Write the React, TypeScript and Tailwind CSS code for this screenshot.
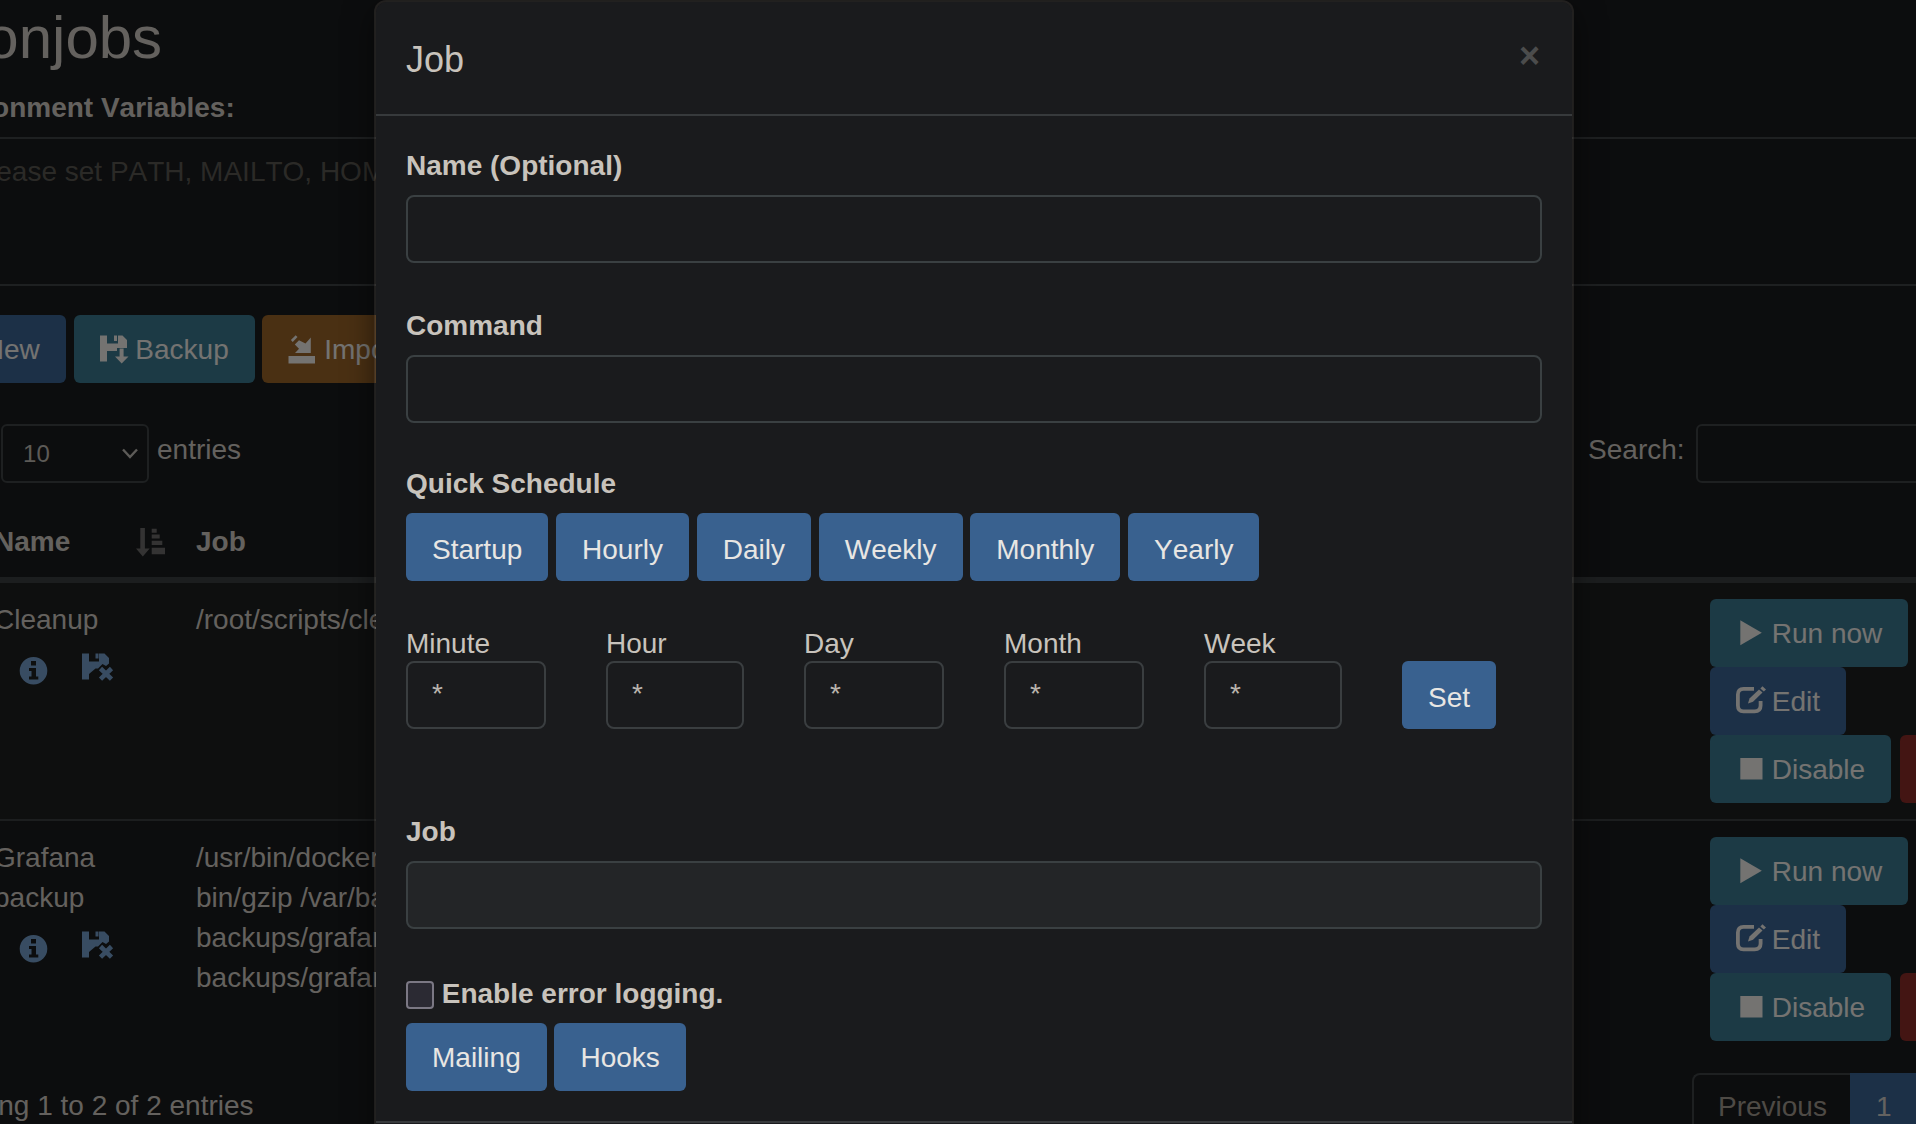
import type { ReactNode } from "react";

type IconName = "plus" | "save" | "remove" | "import" | "sort" | "play" | "edit" | "stop" | "info";

const floppyBody = "M0 .5H7V8.5H17V.5H22.5L27 5V10.5L24 13L20.5 11L16 15.5H13.5L7 21V26.5H0Z";

const shapes: Record<IconName, ReactNode> = {
  plus: <path d="M11 3h6v8h8v6h-8v8h-6v-8H3v-6h8z" />,
  save: (
    <>
      <path d="M0 .5H7V8.5H18V.5H22.5L27 5V13H17V16H7V26.5H0Z" />
      <path d="M14 .5h3v5.5h-3zM19.600 13.500h4v8h4.900L21.700 28.500L15 21.500h4.600z" />
    </>
  ),
  remove: (
    <>
      <path d={floppyBody} />
      <path d="M13.5 .5h3v5h-3z" />
      <path d="M18.500 15.500L29.500 26.200M29.500 15.500L18.500 26.200" stroke="currentColor" strokeWidth="4.600" />
    </>
  ),
  import: (
    <>
      <path d="M22.800 2.500V18H7L11 13.800L6.800 9.600L11 5.200L17.500 8.500z" />
      <path d="M3.800 6L8.600 1.200" stroke="currentColor" strokeWidth="2.600" />
      <path d="M.5 21H27V28.500H.5z" />
    </>
  ),
  sort: (
    <>
      <path d="M4.300 0h4.600v20.500h4.800L6.800 28.500L0 20.500h4.300z" />
      <path d="M15.700 .7h5v4h-5zM15.700 6.500h8v4h-8zM15.700 12.700h10.600v4.200H15.700zM15.700 19.700h13.300v6.500H15.700z" />
    </>
  ),
  play: <path d="M4.300 1.200L25.800 13.700L4.300 26.200z" />,
  edit: (
    <>
      <path
        d="M18 1.900H7.500Q1.900 1.900 1.900 7.500V18.500Q1.900 24.300 7.500 24.300H18.500Q24.600 24.300 24.600 18.500V14"
        fill="none"
        stroke="currentColor"
        strokeWidth="3.800"
      />
      <path d="M12 16.500L13.500 11.500L23 2.500L26.500 5.500L17 14.800z" />
      <path d="M26.400 -.8L30 2.500L27.800 4.500L24.400 1.400z" />
    </>
  ),
  stop: <path d="M4.300 3h22.200v21.500H4.300z" />,
  info: (
    <path
      fillRule="evenodd"
      d="M13.500 0a13.800 13.800 0 1 1 0 27.600a13.800 13.800 0 1 1 0 -27.600zM11 4h5v4.500h-5zM9 11h7v8.500h2.300v3H9v-3h2.500v-5.500H9z"
    />
  ),
};

function Glyph({ name, className = "" }: { name: IconName; className?: string }) {
  return (
    <svg viewBox="0 0 28 28" className={`h-[28px] w-[28px] shrink-0 overflow-visible ${className}`} fill="currentColor">
      {shapes[name]}
    </svg>
  );
}

const tones = {
  primary: "bg-[#39618f]",
  info: "bg-[#38748a]",
  warning: "bg-[#946026]",
  danger: "bg-[#862a26]",
};

function Button({
  tone = "primary",
  icon,
  iconClass,
  labelClass = "pt-[2px]",
  children,
}: {
  tone?: keyof typeof tones;
  icon?: IconName;
  iconClass?: string;
  labelClass?: string;
  children: ReactNode;
}) {
  return (
    <button
      className={`flex h-[68px] shrink-0 items-center gap-[7.780px] rounded-[6px] px-[26px] leading-[40px] whitespace-nowrap text-[#e8e6e3] ${tones[tone]}`}
    >
      {icon && <Glyph name={icon} className={iconClass} />}
      <span className={labelClass}>{children}</span>
    </button>
  );
}

function JobRow({ name, job, striped }: { name: string[]; job: string[]; striped?: boolean }) {
  return (
    <div
      className={`flex h-[238px] border-t-2 border-[#383c3f] pt-[16px] ${striped ? "bg-[#1c1e1f]" : ""}`}
    >
      <div className="w-[202px] shrink-0 pt-px pl-[72px]">
        {name.map((line) => (
          <div key={line}>{line}</div>
        ))}
        <div className="flex pt-[17px] pl-[26px] text-[#7099c4]">
          <Glyph name="info" />
          <Glyph name="remove" className="-mt-[4px] ml-[34px]" />
        </div>
      </div>
      <div className="w-[1586px] shrink-0 pt-px pl-[72px]">
        {job.map((line, i) => (
          <div key={i}>{line}</div>
        ))}
      </div>
      <div>
        <div className="flex">
          <Button tone="info" icon="play" iconClass="mb-px">
            Run now
          </Button>
        </div>
        <div className="flex">
          <Button icon="edit">Edit</Button>
        </div>
        <div className="flex gap-[9px]">
          <Button tone="info" icon="stop">
            Disable
          </Button>
          <Button tone="danger">{""}</Button>
        </div>
      </div>
    </div>
  );
}

function CronPage() {
  return (
    <div className="-ml-[78px] h-[1124px] w-[2180px] shrink-0 pt-[5px]">
      <h2 className="mb-[17px] h-[66px] text-[60px] leading-[66px]">Cronjobs</h2>
      <div className="h-[49px] font-bold">Environment Variables:</div>
      <div className="h-[149px] rounded-[8px] border-2 border-[#3c4042] px-[24px] py-[13px] text-[#57544f]">
        # Please set PATH, MAILTO, HOME
      </div>
      <div className="mt-[29px] flex gap-[7.780px]">
        <Button icon="plus">New</Button>
        <Button tone="info" icon="save">
          Backup
        </Button>
        <Button tone="warning" icon="import">
          Import
        </Button>
      </div>
      <div className="mt-[41px] flex h-[60px]">
        <span className="-mt-[1px] pt-[8px]">Show</span>
        <div className="ml-[9px] flex h-[59px] w-[148px] items-center justify-between rounded-[6px] border-2 border-[#3c4042] pr-[9px] pl-[20px] text-[24px] text-[#b9b4ad]">
          <span className="leading-[36px]">10</span>
          <svg viewBox="0 0 16 11" className="mb-px h-[11px] w-[16px]" fill="none" stroke="#bab6b0" strokeWidth="2.400">
            <path d="M1 1.500L8 9L15 1.500" />
          </svg>
        </div>
        <span className="ml-[8px] pt-[6px]">entries</span>
        <span className="ml-[1347px] pt-[6px]">Search:</span>
        <div className="ml-[11px] h-[59px] w-[320px] rounded-[6px] border-2 border-[#3c4042]" />
      </div>
      <div className="flex h-[97px] items-end border-b-4 border-[#383c3f] pb-[15px] font-bold">
        <div className="flex w-[274px] items-center pl-[72px]">
          Name
          <Glyph name="sort" className="mb-px ml-[66px] text-[#686766]" />
        </div>
        <div>Job</div>
      </div>
      <JobRow striped name={["Cleanup"]} job={["/root/scripts/cleanup.sh"]} />
      <JobRow
        name={["Grafana", "backup"]}
        job={["/usr/bin/docker", "bin/gzip /var/back", "backups/grafana", "backups/grafana"]}
      />
      <div className="mt-[16px] flex">
        <div className="w-[1770px] pt-[13px]">Showing 1 to 2 of 2 entries</div>
        <div className="h-[68px] rounded-l-[8px] border-2 border-r-0 border-[#3c4042] pt-[12px] pr-[23px] pl-[24px] text-[#9c958b]">
          Previous
        </div>
        <div className="h-[68px] bg-[#39618f] px-[26px] py-[14px] text-[#c8c5c1]">1</div>
      </div>
    </div>
  );
}

function Field({ label, disabled }: { label: string; disabled?: boolean }) {
  return (
    <div>
      <div className="mb-[9px] h-[40px] font-bold">{label}</div>
      <div
        className={`h-[68px] rounded-[8px] border-2 border-[#3a4042] ${disabled ? "bg-[#232527]" : "bg-[#1a1b1d]"}`}
      />
    </div>
  );
}

function TimePart({ label, width }: { label: string; width: string }) {
  return (
    <div className={width}>
      <div className="h-[37px]">{label}</div>
      <div className="h-[68px] rounded-[8px] border-2 border-[#3a3e40] px-[24px] py-[11px] text-[#b9b4ad]">*</div>
    </div>
  );
}

function JobModal() {
  return (
    <div className="h-[1300px] w-[1200px] rounded-[12px] border-2 border-[#8c8273]/18 bg-[#1a1b1d] bg-clip-padding shadow-[0_10px_30px_rgba(0,0,0,0.5)]">
      <div className="flex h-[114px] justify-between border-b-2 border-[#373a3c] px-[30px] pt-[32px]">
        <h4 className="text-[36px] leading-[51px]">Job</h4>
        <button className="mt-px mr-[2px] h-[42px] text-[36px] leading-[42px] font-bold text-[#4b4c4c]">×</button>
      </div>
      <div className="h-[1007px] border-b-2 border-[#373a3c] px-[30px] pt-[30px]">
        <Field label="Name (Optional)" />
        <div className="mt-[43px]">
          <Field label="Command" />
        </div>
        <div className="mt-[41px] mb-[9px] h-[40px] font-bold">Quick Schedule</div>
        <div className="flex gap-[7.780px]">
          {["Startup", "Hourly", "Daily", "Weekly", "Monthly", "Yearly"].map((s) => (
            <Button key={s} labelClass="pt-[5px]">
              {s}
            </Button>
          ))}
        </div>
        <div className="mt-[43px] grid grid-cols-[200px_198px_200px_200px_198px_94px] items-end">
          <TimePart label="Minute" width="w-[140px]" />
          <TimePart label="Hour" width="w-[138px]" />
          <TimePart label="Day" width="w-[140px]" />
          <TimePart label="Month" width="w-[140px]" />
          <TimePart label="Week" width="w-[138px]" />
          <Button labelClass="pt-[5px]">Set</Button>
        </div>
        <div className="mt-[83px]">
          <Field label="Job" disabled />
        </div>
        <div className="mt-[45px] mb-[9px] flex h-[40px] font-bold">
          <span className="mt-[7px] mr-[7.780px] h-[28px] w-[28px] rounded-[4px] border-2 border-[#7b7884] bg-[#2b2a33]" />
          Enable error logging.
        </div>
        <div className="flex gap-[7.780px]">
          <Button>Mailing</Button>
          <Button>Hooks</Button>
        </div>
      </div>
    </div>
  );
}

export default function App() {
  return (
    <div className="relative flex h-[1124px] w-[1916px] overflow-hidden bg-[#181a1c] font-['Liberation_Sans',Arial,sans-serif] text-[28px] leading-[40px] text-[#c8c3bc] [font-kerning:none]">
      <CronPage />
      <div className="absolute inset-0 flex items-start overflow-hidden bg-black/50 pl-[374px]">
        <JobModal />
      </div>
    </div>
  );
}
